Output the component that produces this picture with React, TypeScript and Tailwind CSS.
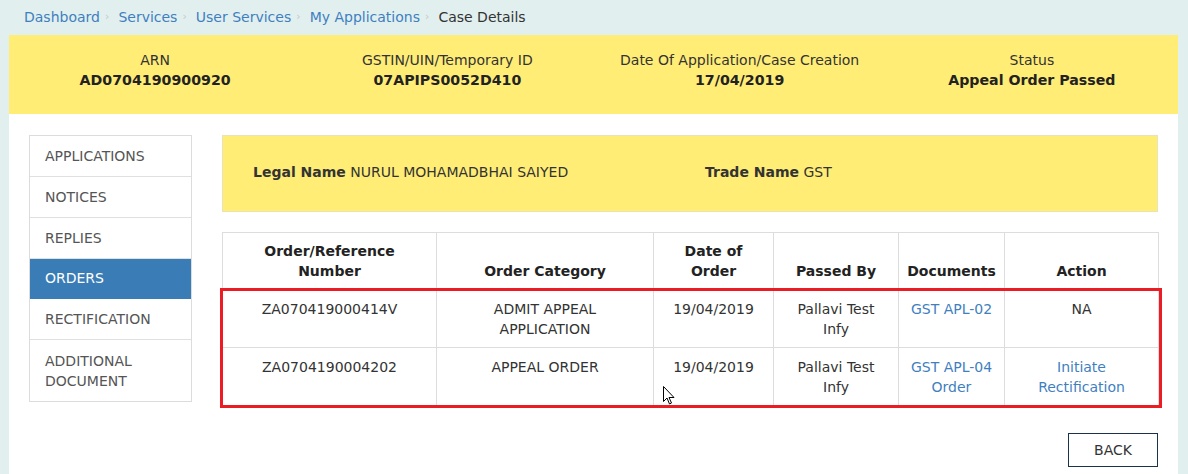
import React from "react";

const font = { fontFamily: '"DejaVu Sans", Verdana, sans-serif' };

function Crumb({ label, last }: { label: string; last?: boolean }) {
  return (
    <span className="flex items-center">
      <span className={last ? "text-[#333]" : "text-[#3f7fbf]"}>{label}</span>
      {!last && <span className="ml-[5px] mr-[9px] text-[11px] text-[#c8c8c8]">›</span>}
    </span>
  );
}

const nav = ["APPLICATIONS", "NOTICES", "REPLIES", "ORDERS", "RECTIFICATION", "ADDITIONAL DOCUMENT"];

export default function App() {
  return (
    <div className="w-[1188px] h-[474px] overflow-hidden bg-[#e1efef] text-[#333]" style={font}>
      <div className="h-[35px] flex items-center pl-[24px] text-[14px]">
        <Crumb label="Dashboard" />
        <Crumb label="Services" />
        <Crumb label="User Services" />
        <Crumb label="My Applications" />
        <Crumb label="Case Details" last />
      </div>
      <div className="ml-[9px] w-[1169px] bg-white h-[439px]">
        <div className="h-[79px] bg-[#ffed76] grid grid-cols-4 pt-[15px] text-center">
          {[
            ["ARN", "AD0704190900920"],
            ["GSTIN/UIN/Temporary ID", "07APIPS0052D410"],
            ["Date Of Application/Case Creation", "17/04/2019"],
            ["Status", "Appeal Order Passed"],
          ].map(([l, v]) => (
            <div key={l}>
              <div className="text-[14px] leading-[20px]">{l}</div>
              <div className="text-[14.2px] leading-[20px] font-bold text-[#222]">{v}</div>
            </div>
          ))}
        </div>
        <div className="flex pt-[21px] pl-[20px]">
          <div className="w-[163px] h-[267px] border border-[#dcdcdc] flex flex-col text-[14px] text-[#555]">
            {nav.map((n) => (
              <div
                key={n}
                className={
                  (n === "ORDERS" ? "bg-[#3a7cb5] text-white h-[41px] border-b border-[#3a7cb5]" : n === "ADDITIONAL DOCUMENT" ? "h-[61px]" : "h-[41px] border-b border-[#e0e0e0]") +
                  " flex items-center pl-[15px] leading-[20px]"
                }
              >
                {n === "ADDITIONAL DOCUMENT" ? (
                  <span>
                    ADDITIONAL
                    <br />
                    DOCUMENT
                  </span>
                ) : (
                  n
                )}
              </div>
            ))}
          </div>
          <div className="ml-[30px] w-[936px]">
            <div className="h-[77px] bg-[#ffed76] border border-[#e8e3b8] flex items-center pb-[3px] text-[14px]">
              <div className="pl-[30px] w-[482px]">
                <span className="font-bold">Legal Name</span> NURUL MOHAMADBHAI SAIYED
              </div>
              <div>
                <span className="font-bold">Trade Name</span> GST
              </div>
            </div>
            <div className="relative mt-[20px]">
              <table className="w-[936px] border-collapse text-[14px] text-center table-fixed">
                <colgroup>
                  <col className="w-[214px]" />
                  <col className="w-[217px]" />
                  <col className="w-[120px]" />
                  <col className="w-[125px]" />
                  <col className="w-[106px]" />
                  <col className="w-[154px]" />
                </colgroup>
                <thead>
                  <tr className="h-[57px]">
                    {["Order/Reference Number", "Order Category", "Date of Order", "Passed By", "Documents", "Action"].map((h, i) => (
                      <th key={h} className="border border-[#dddddd] align-bottom pb-[8px] px-[8px] font-bold leading-[20px] text-[#222]">
                        {i === 0 ? (
                          <>
                            Order/Reference
                            <br />
                            Number
                          </>
                        ) : i === 2 ? (
                          <>
                            Date of
                            <br />
                            Order
                          </>
                        ) : (
                          h
                        )}
                      </th>
                    ))}
                  </tr>
                </thead>
                <tbody>
                  {[
                    ["ZA070419000414V", ["ADMIT APPEAL", "APPLICATION"], ["GST APL-02"], ["NA"], false],
                    ["ZA0704190004202", ["APPEAL ORDER"], ["GST APL-04", "Order"], ["Initiate", "Rectification"], true],
                  ].map(([id, cat, docs, act, link]) => (
                    <tr key={id as string} className="h-[58px]">
                      <td className="border border-[#dddddd] align-top pt-[9px] leading-[20px]">{id as string}</td>
                      <td className="border border-[#dddddd] align-top pt-[9px] leading-[20px]">
                        {(cat as string[]).map((c) => (
                          <div key={c}>{c}</div>
                        ))}
                      </td>
                      <td className="border border-[#dddddd] align-top pt-[9px] leading-[20px]">19/04/2019</td>
                      <td className="border border-[#dddddd] align-top pt-[9px] leading-[20px]">
                        Pallavi Test
                        <br />
                        Infy
                      </td>
                      <td className="border border-[#dddddd] align-top pt-[9px] leading-[20px] text-[#3f7fbf]">
                        {(docs as string[]).map((c) => (
                          <div key={c}>{c}</div>
                        ))}
                      </td>
                      <td className={"border border-[#dddddd] align-top pt-[9px] leading-[20px] " + (link ? "text-[#3f7fbf]" : "")}>
                        {(act as string[]).map((c) => (
                          <div key={c}>{c}</div>
                        ))}
                      </td>
                    </tr>
                  ))}
                </tbody>
              </table>
              <div className="absolute left-[-2px] top-[56px] w-[942px] h-[120px] border-[3px] border-[#ec1c24] pointer-events-none" />
              <svg className="absolute left-[441px] top-[154px]" width="12" height="19" viewBox="0 0 12 19">
                <path d="M0.5 0.5 L0.5 15.5 L4 12 L6.5 18 L8.5 17 L6 11.5 L11 11.5 Z" fill="white" stroke="black" strokeWidth="1" />
              </svg>
            </div>
            <div className="flex justify-end mt-[27px]">
              <button className="w-[90px] h-[34px] border border-[#1c3050] text-[14px] text-[#333] bg-white">BACK</button>
            </div>
          </div>
        </div>
      </div>
    </div>
  );
}
